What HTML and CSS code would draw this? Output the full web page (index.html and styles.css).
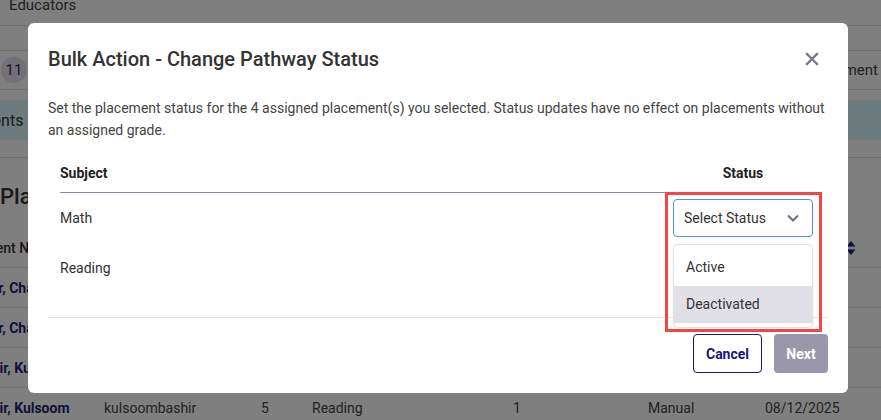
FILE: index.html
```html
<!DOCTYPE html>
<html lang="en">
<head>
<meta charset="utf-8">
<title>Bulk Action - Change Pathway Status</title>
<link rel="stylesheet" href="styles.css">
</head>
<body>
<div class="page">
  <div class="top-row"><span class="top-link">Educators</span></div>
  <div class="blank-row"></div>
  <div class="tabs-row">
    <span class="badge">11</span>
    <span class="tab-right">Assessment</span>
  </div>
  <div class="band-space"></div>
  <div class="band"><span class="band-text">Students have no placement</span></div>
  <div class="band-after"></div>
  <div class="page-title">Placements</div>
  <div class="grid-head">
    <span class="head-name">Student Name</span>
    <svg class="sort" width="10" height="16" viewBox="0 0 10 16"><path d="M5 1 L9.5 6.5 H0.5 Z M5 15 L9.5 9.5 H0.5 Z" fill="#1e1e80"/></svg>
  </div>
  <div class="grid-row"><span class="name">Bashir, Chanel</span></div>
  <div class="grid-row"><span class="name">Bashir, Chanel</span></div>
  <div class="grid-row"><span class="name name2">Bashir, Kulsoom</span></div>
  <div class="grid-row cols">
    <span class="name name2">Bashir, Kulsoom</span>
    <span>kulsoombashir</span>
    <span>5</span>
    <span>Reading</span>
    <span>1</span>
    <span>Manual</span>
    <span>08/12/2025</span>
  </div>
</div>

<div class="overlay"></div>

<div class="modal" role="dialog">
  <div class="modal-header">
    <h1 class="modal-title">Bulk Action - Change Pathway Status</h1>
    <svg class="close" width="14" height="14" viewBox="0 0 14 14"><path d="M2 2 L12 12 M12 2 L2 12" stroke="#7b7592" stroke-width="2.4" stroke-linecap="square"/></svg>
  </div>
  <div class="modal-body">
    <p class="desc">Set the placement status for the 4 assigned placement(s) you selected. Status updates have no effect on placements without an assigned grade.</p>
    <div class="tbl">
      <div class="tbl-head">
        <span class="col-subject">Subject</span>
        <span class="col-status">Status</span>
      </div>
      <div class="tbl-row">
        <span class="col-subject">Math</span>
        <div class="col-status">
          <div class="select-wrap">
            <div class="select">
              <span>Select Status</span>
              <svg class="chev" width="14" height="10" viewBox="0 0 14 10"><path d="M2 2.5 L7 7.5 L12 2.5" fill="none" stroke="#6e6a80" stroke-width="2"/></svg>
            </div>
            <ul class="menu">
              <li class="opt">Active</li>
              <li class="opt opt-hover">Deactivated</li>
            </ul>
          </div>
        </div>
      </div>
      <div class="tbl-row">
        <span class="col-subject">Reading</span>
        <div class="col-status"></div>
      </div>
    </div>
  </div>
  <div class="modal-footer">
    <button class="btn btn-cancel">Cancel</button>
    <button class="btn btn-next">Next</button>
  </div>
  <div class="highlight"></div>
</div>
</body>
</html>
```
FILE: styles.css
```css
* { box-sizing: border-box; }
html, body { margin: 0; padding: 0; }
body {
  width: 881px;
  height: 420px;
  overflow: hidden;
  font-family: Roboto, "Liberation Sans", sans-serif;
  background: #ffffff;
  color: #333;
  position: relative;
}

/* ---------- background page ---------- */
.page { width: 881px; }
.top-row {
  height: 26px;
  border-bottom: 1px solid #dedede;
  padding-left: 9px;
  overflow: hidden;
}
.top-link {
  display: block;
  font-size: 15px;
  line-height: 15px;
  margin-top: -2px;
  color: #444;
}
.blank-row {
  height: 25px;
  border-bottom: 1px solid #dedede;
}
.tabs-row {
  height: 39px;
  border-bottom: 1px solid #dedede;
  display: flex;
  align-items: center;
  justify-content: space-between;
  overflow: hidden;
}
.badge {
  width: 26px;
  height: 26px;
  margin-left: 1px;
  border-radius: 50%;
  background: #e6e1f2;
  display: flex;
  align-items: center;
  justify-content: center;
  font-size: 15px;
  color: #333;
}
.tab-right {
  font-size: 15px;
  color: #444;
  margin-right: 3px;
}
.band-space { height: 10px; }
.band {
  height: 40px;
  background: #d8f6f9;
  display: flex;
  align-items: center;
  overflow: hidden;
}
.band-text {
  font-size: 16px;
  color: #333;
  margin-left: -40px;
  white-space: nowrap;
}
.band-after {
  height: 18px;
  border-bottom: 1px solid #dedede;
}
.page-title {
  height: 70px;
  padding-top: 27px;
  font-size: 22px;
  line-height: 24px;
  font-weight: 500;
  color: #333;
  white-space: nowrap;
}
.grid-head {
  height: 40px;
  border-bottom: 1px solid #dedede;
  display: flex;
  align-items: center;
  justify-content: space-between;
  overflow: hidden;
}
.head-name {
  font-size: 14px;
  font-weight: 500;
  color: #333;
  margin-left: -33px;
  white-space: nowrap;
}
.sort { margin-right: 25px; }
.grid-row {
  height: 40px;
  border-bottom: 1px solid #dedede;
  display: flex;
  align-items: center;
  font-size: 14px;
  color: #444;
  overflow: hidden;
  white-space: nowrap;
}
.name {
  font-weight: 700;
  color: #1e1e6e;
  margin-left: -37px;
  width: 140px;
  flex: none;
}
.name2 { margin-left: -32px; }
.cols {
  display: grid;
  grid-template-columns: 104px 157px 51px 201px 135px 117px 1fr;
}
.cols .name { margin-left: -32px; width: auto; }

.overlay {
  position: absolute;
  inset: 0;
  background: rgba(0, 0, 0, 0.5);
}

/* ---------- modal ---------- */
.modal {
  position: absolute;
  left: 28px;
  top: 23px;
  width: 820px;
  height: 370px;
  background: #ffffff;
  border-radius: 6px;
  display: flex;
  flex-direction: column;
}
.modal-header {
  display: flex;
  align-items: center;
  justify-content: space-between;
  padding: 24px 29px 0 20px;
}
.modal-title {
  margin: 0;
  font-size: 20px;
  line-height: 24px;
  font-weight: 500;
  color: #333;
}
.close { display: block; }
.modal-body { padding: 0 20px; }
.desc {
  margin: 26px 0 0;
  font-size: 14px;
  line-height: 22px;
  color: #444;
}
.tbl { margin: 12px 12px 0; }
.tbl-head {
  height: 40px;
  border-bottom: 1px solid #8d88a3;
  display: flex;
  align-items: center;
  justify-content: space-between;
  font-size: 14px;
  font-weight: 700;
  color: #222;
}
.tbl-row {
  height: 50px;
  display: flex;
  align-items: center;
  justify-content: space-between;
  font-size: 14px;
  color: #333;
}
.col-status {
  width: 146px;
  display: flex;
  justify-content: center;
}
.select-wrap { position: relative; }
.select {
  width: 140px;
  height: 38px;
  border: 1px solid #4d8ff0;
  border-radius: 4px;
  display: flex;
  align-items: center;
  justify-content: space-between;
  padding: 0 12px 0 10px;
  font-size: 14px;
  color: #333;
}
.chev { display: block; }
.menu {
  position: absolute;
  left: 0;
  top: 45px;
  width: 140px;
  margin: 0;
  padding: 4px 0;
  list-style: none;
  background: #fff;
  border: 1px solid #e2e2e6;
  border-radius: 5px;
  box-shadow: 0 1px 3px rgba(0, 0, 0, 0.08);
  z-index: 2;
}
.opt {
  height: 37px;
  line-height: 37px;
  padding: 0 12px;
  font-size: 14px;
  color: #333;
}
.opt-hover { background: #e1e0e7; }

.modal-footer {
  margin: 24px 20px 0;
  border-top: 1px solid #e3e3e3;
  padding-top: 16px;
  display: flex;
  justify-content: flex-end;
  gap: 12px;
}
.btn {
  height: 39px;
  border-radius: 4px;
  font-family: Roboto, "Liberation Sans", sans-serif;
  font-size: 14px;
  font-weight: 700;
  padding: 0;
}
.btn-cancel {
  width: 69px;
  background: #fff;
  border: 1.5px solid #1b1580;
  color: #1b1580;
}
.btn-next {
  width: 54px;
  background: #9a97ac;
  border: none;
  color: #fff;
}
.highlight {
  position: absolute;
  left: 637px;
  top: 169px;
  width: 157px;
  height: 140px;
  border: 3px solid #f44545;
  z-index: 3;
  pointer-events: none;
}
```
